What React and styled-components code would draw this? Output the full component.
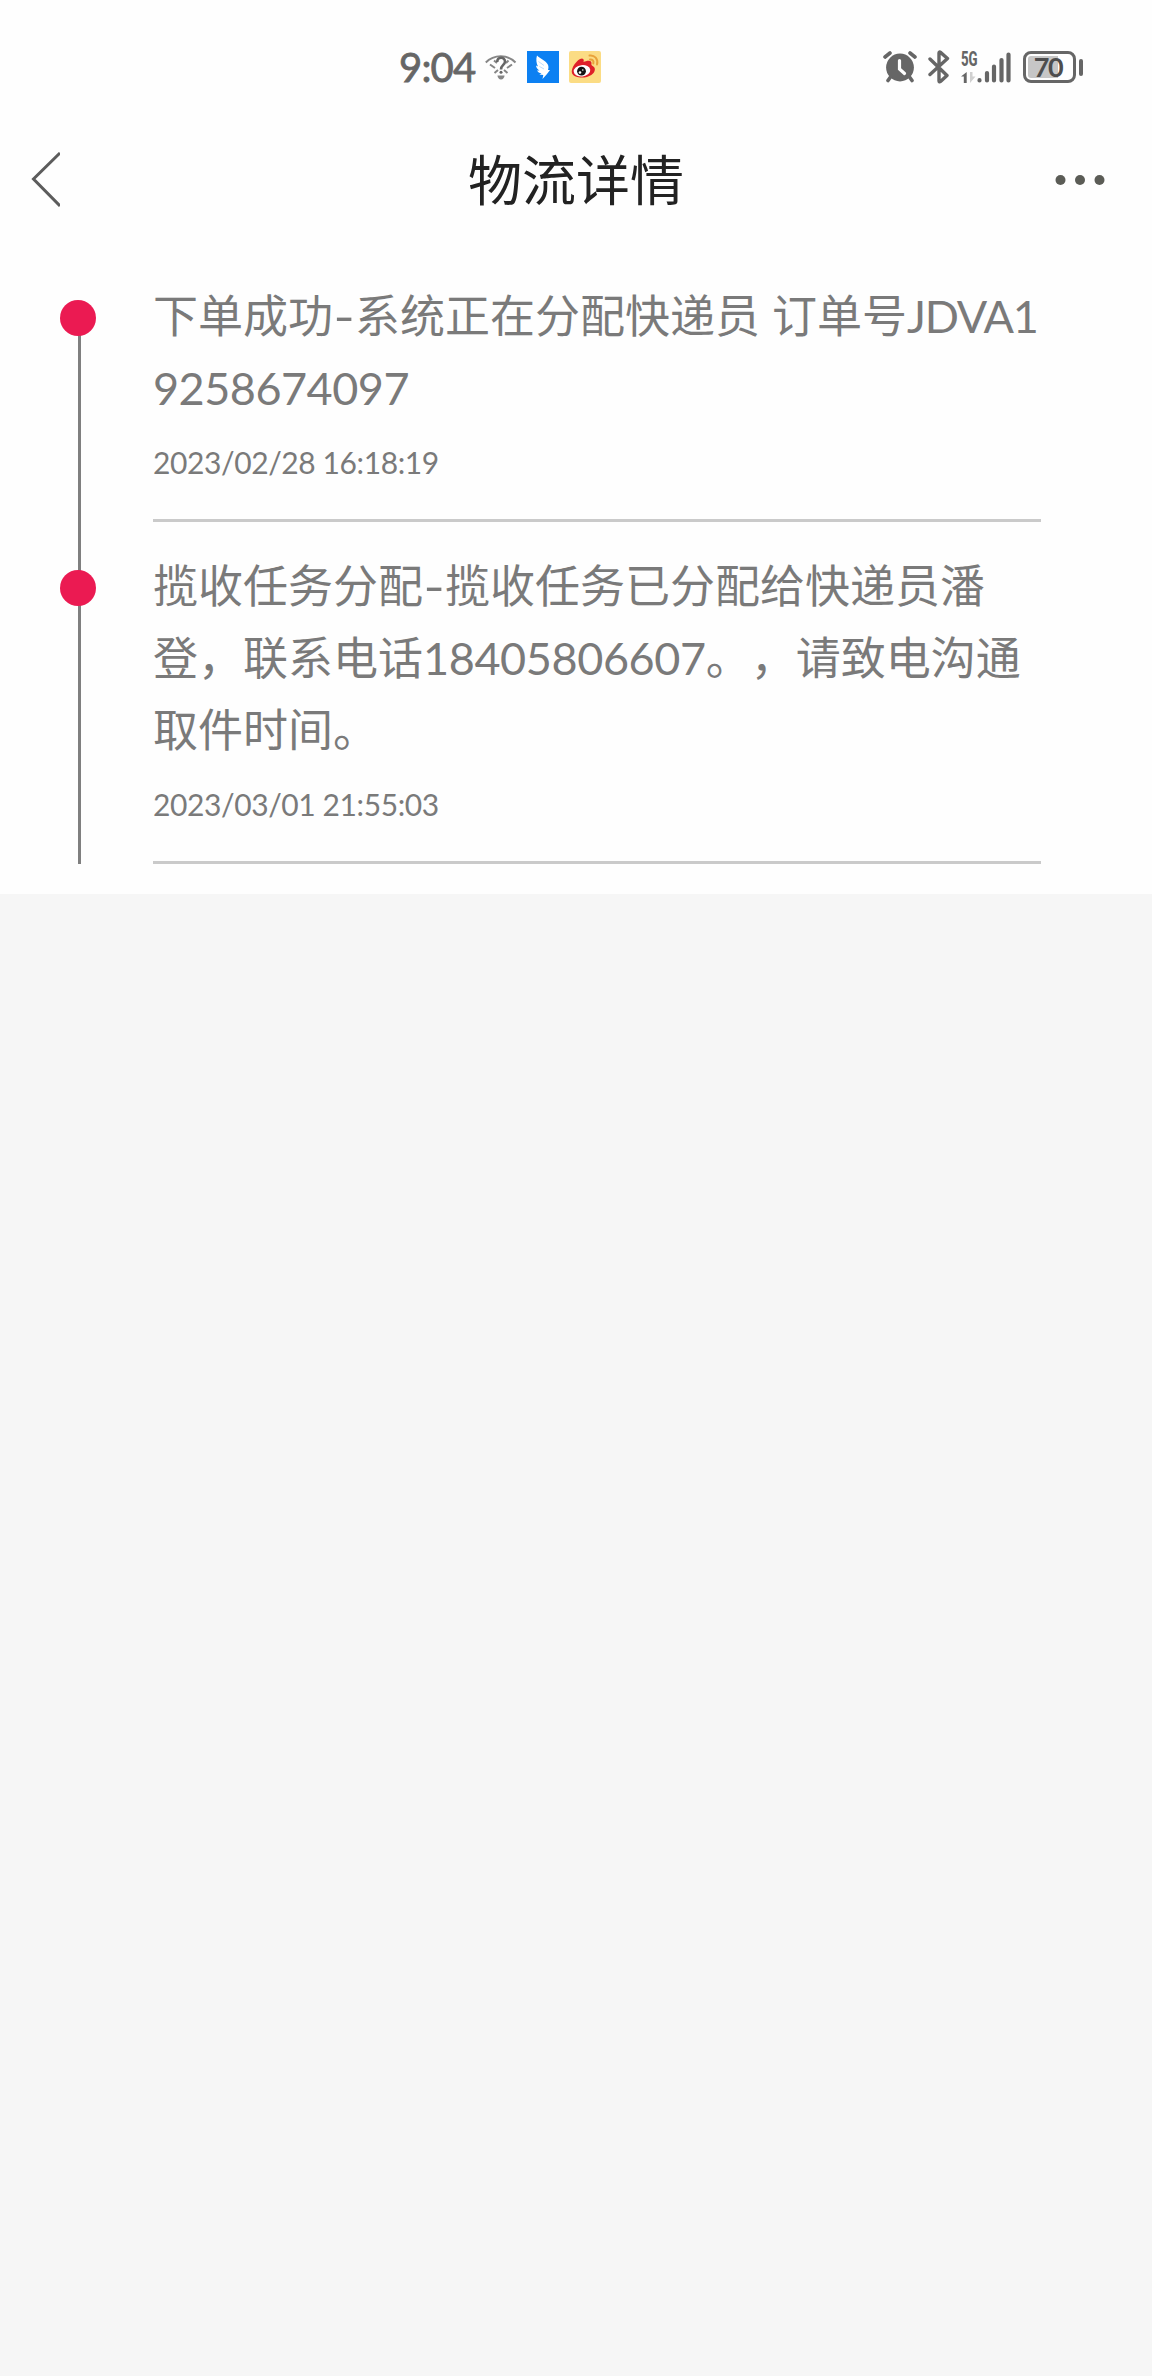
import React from 'react'
import styled, { createGlobalStyle } from 'styled-components'

const INK = '#666666'

const GlobalStyle = createGlobalStyle`
  body {
    margin: 0;
    background: #f6f6f6;
    font-family: Lato, "Noto Sans CJK SC", sans-serif;
    text-spacing-trim: space-all;
  }
`

const Page = styled.div`
  width: 1152px;
  min-height: 2376px;
  background: #f6f6f6;
`

const StatusBar = styled.div`
  display: flex;
  align-items: center;
  justify-content: space-between;
  box-sizing: border-box;
  height: 134px;
  padding: 0 69px 0 399px;
  background: #fefefe;
  color: ${INK};
`

const StatusGroup = styled.div`
  display: flex;
  align-items: center;
  gap: ${p => p.$gap}px;

  svg {
    display: block;
  }
`

const Clock = styled.span`
  width: 76px;
  font-size: 40px;
  line-height: 48px;
  font-weight: 400;
  letter-spacing: -0.8px;
  white-space: nowrap;
  -webkit-text-stroke: 0.8px ${INK};
`

const Network = styled.div`
  display: flex;
  flex-direction: column;
  justify-content: space-between;
  width: 16px;
  height: 32px;
`

const NetworkLabel = styled.span`
  font-family: Roboto, sans-serif;
  font-size: 20px;
  font-weight: 800;
  line-height: 17px;
  transform: scaleX(0.66);
  transform-origin: left;
`

const Battery = styled.div`
  display: flex;
  align-items: center;
  gap: 3px;
`

const BatteryBody = styled.div`
  position: relative;
  box-sizing: border-box;
  width: 53px;
  height: 32px;
  border: 3px solid ${INK};
  border-radius: 8px;
  padding: 2px;
`

const BatteryLevel = styled.div`
  height: 100%;
  border-radius: 3px 0 0 3px;
  background: #c6c6c6;
`

const BatteryText = styled.span`
  position: absolute;
  inset: 0 3px 0 0;
  color: #4d4d4d;
  font-size: 27px;
  font-weight: 700;
  line-height: 26px;
  letter-spacing: -1.5px;
  text-align: center;
`

const BatteryTip = styled.div`
  width: 4px;
  height: 17px;
  border-radius: 2px;
  background: ${INK};
`

const NavBar = styled.div`
  display: grid;
  grid-template-columns: 120px 1fr 120px;
  align-items: center;
  box-sizing: border-box;
  height: 92px;
  padding: 0 47px 0 30px;
  background: #fefefe;

  svg {
    display: block;
  }
  svg:last-child {
    justify-self: end;
  }
`

const Title = styled.h1`
  margin: 0;
  padding: 2px 0 0 17px;
  color: #222;
  font-size: 54px;
  font-weight: 400;
  line-height: 80px;
  text-align: center;
`

const Timeline = styled.div`
  padding: 54px 111px 30px 60px;
  background: #fefefe;
`

const Step = styled.div`
  display: flex;
`

const Rail = styled.div`
  position: relative;
  flex: none;
  width: 93px;

  &::before {
    content: '';
    position: absolute;
    left: 18px;
    top: ${p => (p.$first ? 36 : 0)}px;
    bottom: 0;
    width: 3px;
    background: #7f7f7f;
  }
`

const Dot = styled.div`
  position: relative;
  width: 36px;
  height: 36px;
  margin-top: ${p => (p.$first ? 20 : 48)}px;
  border-radius: 50%;
  background: #eb1a52;
`

const StepBody = styled.div`
  flex: 1;
  padding: ${p => (p.$first ? 0 : 28)}px 0 38px;
  border-bottom: 3px solid #cacaca;
  color: #7a7a7a;
`

const Message = styled.p`
  margin: 0;
  font-size: 45px;
  line-height: 72px;
  word-break: break-all;
`

const Code = styled.span`
  letter-spacing: ${p => p.$spacing || 0}px;
`

const Hyphen = styled.span`
  display: inline-block;
  width: 22px;
  text-align: center;
  transform: scaleX(1.3);
`

const Time = styled.div`
  margin-top: 19px;
  font-size: 30px;
  line-height: 38px;
  letter-spacing: -0.4px;
  white-space: nowrap;
`

const WifiIcon = () => (
  <svg width="32" height="26" viewBox="0 0 32 26" fill="none" stroke="#868686" strokeWidth="2">
    <path d="M.8 8.500C9 .2 22.500.2 30.500 8.500" />
    <path d="M5 10.500l5 3.500M27 10.500l-5 3.500M9 6.500l3 2.500M23.500 6.500l-2.500 2.500M9.500 19l3.500-3M22.500 19l-3.500-3" />
    <path d="M12.200 8c0-5.500 7.800-5.500 7.800-.5 0 3.500-4 3.500-4 8" stroke={INK} strokeWidth="2.600" />
    <circle cx="16" cy="18.300" r="1.500" fill={INK} stroke="none" />
    <path d="M12.500 21.500h7c0 2-1.500 4-3.500 4s-3.500-2-3.500-4z" fill="#868686" stroke="none" />
  </svg>
)

const DingIcon = () => (
  <svg width="32" height="32" viewBox="0 0 32 32">
    <rect width="32" height="32" fill="#0c80f2" />
    <path d="M10 4.500c3.500 3.200 8.500 5 10.800 9 .9 1.800.8 3.600.2 5.500h2l-3.200 4.300-4.300 4.700.8-4-4-.4 2.200-1.200c-2.200-.3-3.600-1.400-4.500-2.900l2.500.1c-2.100-1.200-3.300-2.900-3.500-5l2 .8C9.300 12.800 8.800 8 10 4.500z" fill="#fff" />
    <path d="M11.500 10.500l5.500 4M12.500 15.500l4.500 2.500" stroke="#9fcdfb" strokeWidth=".7" />
  </svg>
)

const WeiboIcon = () => (
  <svg width="32" height="32" viewBox="0 0 32 32">
    <rect width="32" height="32" rx="2" fill="#fbdc84" />
    <path d="M13 7.500c2 .3 2 2 1.500 3.500 3-1.500 8-2.500 8 1-.2 1.500-.2 2 .8 2.800 4.500 2.200 2.500 7-1 9.200-6 4-17 3.200-19.300-1.800C1.500 17.500 8 8 13 7.500z" fill="#df2029" />
    <ellipse cx="13" cy="19.800" rx="8.300" ry="5.700" transform="rotate(-7 13 19.800)" fill="#fff" />
    <circle cx="12.500" cy="20.200" r="4.400" fill="#141414" />
    <circle cx="11" cy="21.500" r="1.300" fill="#fff" />
    <circle cx="13.800" cy="19" r=".8" fill="#fff" />
    <g fill="none" stroke="#e9a23b" strokeWidth="2" strokeLinecap="round">
      <path d="M20.500 4.500c5-.8 9 3.500 7.500 9" />
      <path d="M21 8.500c2.500-.3 4 1.500 3.300 4" />
    </g>
  </svg>
)

const AlarmIcon = () => (
  <svg width="34" height="32" viewBox="0 0 34 32" fill="none" strokeLinecap="round">
    <circle cx="17" cy="16.500" r="13.900" fill={INK} />
    <path d="M2 6l5-4M32 6l-5-4M7.500 26L5 29.500M26.500 26l2.500 3.500" stroke={INK} strokeWidth="3.600" />
    <path d="M16.500 9.500v8.500l5 4.500" stroke="#fefefe" strokeWidth="3.200" />
  </svg>
)

const BluetoothIcon = () => (
  <svg width="22" height="34" viewBox="0 0 22 34" fill="none" stroke={INK} strokeWidth="3.400" strokeLinecap="round" strokeLinejoin="round">
    <path d="M2 9l17 16.500-6.500 6c-.8.600-1.500.400-1.500-.6V3c0-1 .7-1.300 1.500-.6L19.500 8.500 2 24.500" />
  </svg>
)

const DataArrows = () => (
  <svg width="17" height="12" viewBox="0 0 17 12">
    <path d="M5.700 1v11H2.800V5.500H0z" fill={INK} />
    <path d="M9 1v11l5.500-6.500h-3V1z" fill="#d0d0d0" />
  </svg>
)

const SignalIcon = () => (
  <svg width="35" height="32" viewBox="0 0 35 32" stroke={INK} strokeWidth="4.200" strokeLinecap="round">
    <path d="M2.500 29.200v.3M10 22v7.500M17 15.500v14M24.500 9v20.500M31.500 3.500v26" />
  </svg>
)

const BackIcon = () => (
  <svg width="30" height="56" viewBox="0 0 30 56" fill="none" stroke="#5c5c5c" strokeWidth="3">
    <path d="M30 1L3.500 27 30 54" />
  </svg>
)

const MoreIcon = () => (
  <svg width="50" height="12" viewBox="0 0 50 12" fill="#5b5c56">
    <circle cx="5.500" cy="6" r="5" />
    <circle cx="25" cy="6" r="5" />
    <circle cx="44.500" cy="6" r="5" />
  </svg>
)

const steps = [
  {
    time: '2023/02/28 16:18:19',
    message: (
      <>
        下单成功<Hyphen>-</Hyphen>系统正在分配快递员<Code $spacing={0.5}> </Code>订单号<Code $spacing={-1.3}>JDVA</Code><Code $spacing={-0.5}>19258674097</Code>
      </>
    ),
  },
  {
    time: '2023/03/01 21:55:03',
    message: (
      <>
        揽收任务分配<Hyphen>-</Hyphen>揽收任务已分配给快递员潘登，联系电话<Code $spacing={-0.4}>18405806607</Code>。，请致电沟通取件时间。
      </>
    ),
  },
]

const App = () => (
  <Page>
    <GlobalStyle />
    <StatusBar>
      <StatusGroup $gap={10}>
        <Clock>9:04</Clock>
        <WifiIcon />
        <DingIcon />
        <WeiboIcon />
      </StatusGroup>
      <StatusGroup $gap={11}>
        <AlarmIcon />
        <BluetoothIcon />
        <StatusGroup $gap={0}>
          <Network>
            <NetworkLabel>5G</NetworkLabel>
            <DataArrows />
          </Network>
          <SignalIcon />
        </StatusGroup>
        <Battery>
          <BatteryBody>
            <BatteryLevel style={{ width: '70%' }} />
            <BatteryText>70</BatteryText>
          </BatteryBody>
          <BatteryTip />
        </Battery>
      </StatusGroup>
    </StatusBar>
    <NavBar>
      <BackIcon />
      <Title>物流详情</Title>
      <MoreIcon />
    </NavBar>
    <Timeline>
      {steps.map((step, i) => (
        <Step key={step.time}>
          <Rail $first={i === 0}>
            <Dot $first={i === 0} />
          </Rail>
          <StepBody $first={i === 0}>
            <Message>{step.message}</Message>
            <Time>{step.time}</Time>
          </StepBody>
        </Step>
      ))}
    </Timeline>
  </Page>
)

export default App
